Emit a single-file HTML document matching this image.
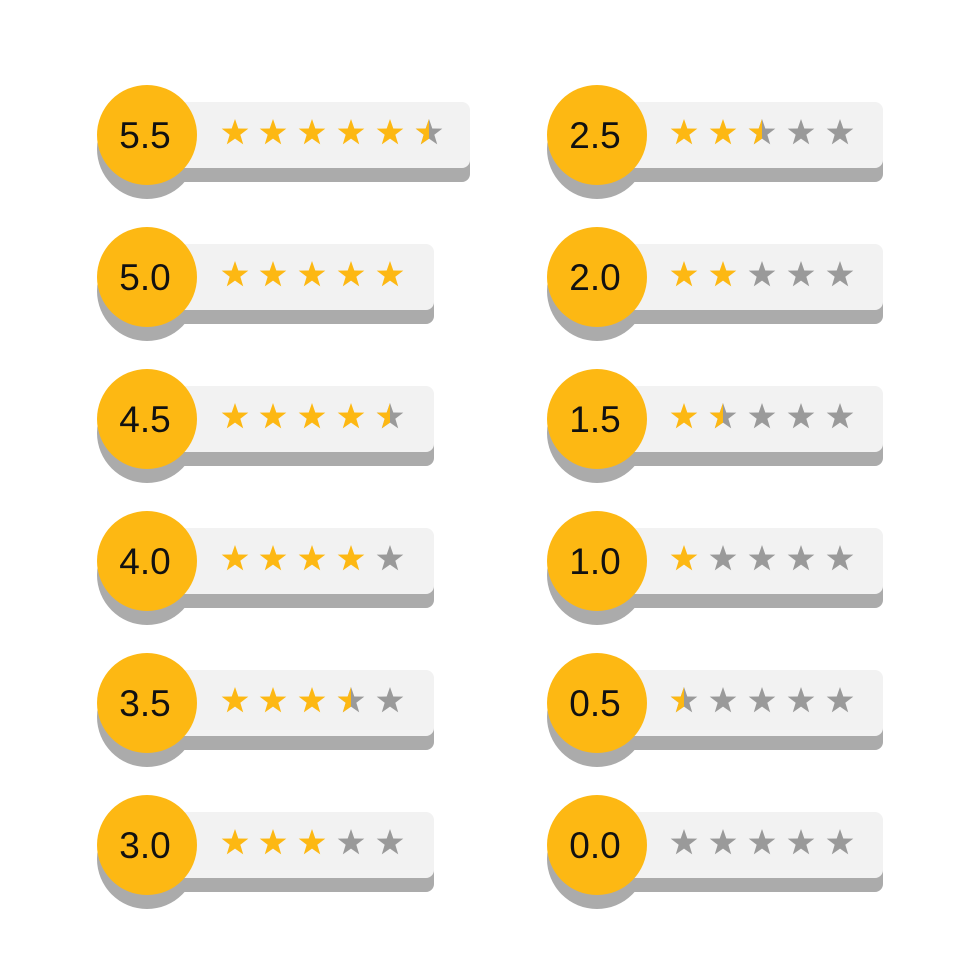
<!DOCTYPE html>
<html><head><meta charset="utf-8"><style>html,body{margin:0;padding:0;background:#fff}svg{display:block}</style></head>
<body>
<svg width="980" height="980" viewBox="0 0 980 980" xmlns="http://www.w3.org/2000/svg">
<defs>
<path id="s" d="M0,-14 L3.29,-4.53 L13.31,-4.33 L5.33,1.73 L8.23,11.33 L0,5.6 L-8.23,11.33 L-5.33,1.73 L-13.31,-4.33 L-3.29,-4.53Z"/>
<clipPath id="lh"><rect x="-20" y="-20" width="20" height="40"/></clipPath>
<g id="y"><use href="#s" fill="#FDB813"/></g>
<g id="g"><use href="#s" fill="#9a9a9a"/></g>
<g id="h"><use href="#s" fill="#9a9a9a"/><use href="#s" fill="#FDB813" clip-path="url(#lh)"/></g>
</defs>
<style>text{font-family:"Liberation Sans",sans-serif;font-size:37px;fill:#111;text-anchor:middle}</style>

<g transform="translate(0,135)">
<circle cx="147" cy="14" r="50" fill="#ababab"/>
<rect x="175" y="-19" width="295" height="66" rx="8" fill="#ababab"/>
<rect x="175" y="-33" width="295" height="66" rx="8" fill="#f2f2f2"/>
<circle cx="147" cy="0" r="50" fill="#FDB813"/>
<text x="145" y="13">5.5</text>
<use href="#y" x="235" y="-2"/><use href="#y" x="273" y="-2"/><use href="#y" x="312" y="-2"/><use href="#y" x="351" y="-2"/><use href="#y" x="390" y="-2"/><use href="#h" x="429" y="-2"/>
</g>
<g transform="translate(0,277)">
<circle cx="147" cy="14" r="50" fill="#ababab"/>
<rect x="175" y="-19" width="259" height="66" rx="8" fill="#ababab"/>
<rect x="175" y="-33" width="259" height="66" rx="8" fill="#f2f2f2"/>
<circle cx="147" cy="0" r="50" fill="#FDB813"/>
<text x="145" y="13">5.0</text>
<use href="#y" x="235" y="-2"/><use href="#y" x="273" y="-2"/><use href="#y" x="312" y="-2"/><use href="#y" x="351" y="-2"/><use href="#y" x="390" y="-2"/>
</g>
<g transform="translate(0,419)">
<circle cx="147" cy="14" r="50" fill="#ababab"/>
<rect x="175" y="-19" width="259" height="66" rx="8" fill="#ababab"/>
<rect x="175" y="-33" width="259" height="66" rx="8" fill="#f2f2f2"/>
<circle cx="147" cy="0" r="50" fill="#FDB813"/>
<text x="145" y="13">4.5</text>
<use href="#y" x="235" y="-2"/><use href="#y" x="273" y="-2"/><use href="#y" x="312" y="-2"/><use href="#y" x="351" y="-2"/><use href="#h" x="390" y="-2"/>
</g>
<g transform="translate(0,561)">
<circle cx="147" cy="14" r="50" fill="#ababab"/>
<rect x="175" y="-19" width="259" height="66" rx="8" fill="#ababab"/>
<rect x="175" y="-33" width="259" height="66" rx="8" fill="#f2f2f2"/>
<circle cx="147" cy="0" r="50" fill="#FDB813"/>
<text x="145" y="13">4.0</text>
<use href="#y" x="235" y="-2"/><use href="#y" x="273" y="-2"/><use href="#y" x="312" y="-2"/><use href="#y" x="351" y="-2"/><use href="#g" x="390" y="-2"/>
</g>
<g transform="translate(0,703)">
<circle cx="147" cy="14" r="50" fill="#ababab"/>
<rect x="175" y="-19" width="259" height="66" rx="8" fill="#ababab"/>
<rect x="175" y="-33" width="259" height="66" rx="8" fill="#f2f2f2"/>
<circle cx="147" cy="0" r="50" fill="#FDB813"/>
<text x="145" y="13">3.5</text>
<use href="#y" x="235" y="-2"/><use href="#y" x="273" y="-2"/><use href="#y" x="312" y="-2"/><use href="#h" x="351" y="-2"/><use href="#g" x="390" y="-2"/>
</g>
<g transform="translate(0,845)">
<circle cx="147" cy="14" r="50" fill="#ababab"/>
<rect x="175" y="-19" width="259" height="66" rx="8" fill="#ababab"/>
<rect x="175" y="-33" width="259" height="66" rx="8" fill="#f2f2f2"/>
<circle cx="147" cy="0" r="50" fill="#FDB813"/>
<text x="145" y="13">3.0</text>
<use href="#y" x="235" y="-2"/><use href="#y" x="273" y="-2"/><use href="#y" x="312" y="-2"/><use href="#g" x="351" y="-2"/><use href="#g" x="390" y="-2"/>
</g>

<g transform="translate(450,135)">
<circle cx="147" cy="14" r="50" fill="#ababab"/>
<rect x="175" y="-19" width="258" height="66" rx="8" fill="#ababab"/>
<rect x="175" y="-33" width="258" height="66" rx="8" fill="#f2f2f2"/>
<circle cx="147" cy="0" r="50" fill="#FDB813"/>
<text x="145" y="13">2.5</text>
<use href="#y" x="234" y="-2"/><use href="#y" x="273" y="-2"/><use href="#h" x="312" y="-2"/><use href="#g" x="351" y="-2"/><use href="#g" x="390" y="-2"/>
</g>
<g transform="translate(450,277)">
<circle cx="147" cy="14" r="50" fill="#ababab"/>
<rect x="175" y="-19" width="258" height="66" rx="8" fill="#ababab"/>
<rect x="175" y="-33" width="258" height="66" rx="8" fill="#f2f2f2"/>
<circle cx="147" cy="0" r="50" fill="#FDB813"/>
<text x="145" y="13">2.0</text>
<use href="#y" x="234" y="-2"/><use href="#y" x="273" y="-2"/><use href="#g" x="312" y="-2"/><use href="#g" x="351" y="-2"/><use href="#g" x="390" y="-2"/>
</g>
<g transform="translate(450,419)">
<circle cx="147" cy="14" r="50" fill="#ababab"/>
<rect x="175" y="-19" width="258" height="66" rx="8" fill="#ababab"/>
<rect x="175" y="-33" width="258" height="66" rx="8" fill="#f2f2f2"/>
<circle cx="147" cy="0" r="50" fill="#FDB813"/>
<text x="145" y="13">1.5</text>
<use href="#y" x="234" y="-2"/><use href="#h" x="273" y="-2"/><use href="#g" x="312" y="-2"/><use href="#g" x="351" y="-2"/><use href="#g" x="390" y="-2"/>
</g>
<g transform="translate(450,561)">
<circle cx="147" cy="14" r="50" fill="#ababab"/>
<rect x="175" y="-19" width="258" height="66" rx="8" fill="#ababab"/>
<rect x="175" y="-33" width="258" height="66" rx="8" fill="#f2f2f2"/>
<circle cx="147" cy="0" r="50" fill="#FDB813"/>
<text x="145" y="13">1.0</text>
<use href="#y" x="234" y="-2"/><use href="#g" x="273" y="-2"/><use href="#g" x="312" y="-2"/><use href="#g" x="351" y="-2"/><use href="#g" x="390" y="-2"/>
</g>
<g transform="translate(450,703)">
<circle cx="147" cy="14" r="50" fill="#ababab"/>
<rect x="175" y="-19" width="258" height="66" rx="8" fill="#ababab"/>
<rect x="175" y="-33" width="258" height="66" rx="8" fill="#f2f2f2"/>
<circle cx="147" cy="0" r="50" fill="#FDB813"/>
<text x="145" y="13">0.5</text>
<use href="#h" x="234" y="-2"/><use href="#g" x="273" y="-2"/><use href="#g" x="312" y="-2"/><use href="#g" x="351" y="-2"/><use href="#g" x="390" y="-2"/>
</g>
<g transform="translate(450,845)">
<circle cx="147" cy="14" r="50" fill="#ababab"/>
<rect x="175" y="-19" width="258" height="66" rx="8" fill="#ababab"/>
<rect x="175" y="-33" width="258" height="66" rx="8" fill="#f2f2f2"/>
<circle cx="147" cy="0" r="50" fill="#FDB813"/>
<text x="145" y="13">0.0</text>
<use href="#g" x="234" y="-2"/><use href="#g" x="273" y="-2"/><use href="#g" x="312" y="-2"/><use href="#g" x="351" y="-2"/><use href="#g" x="390" y="-2"/>
</g>
</svg>
</body></html>
